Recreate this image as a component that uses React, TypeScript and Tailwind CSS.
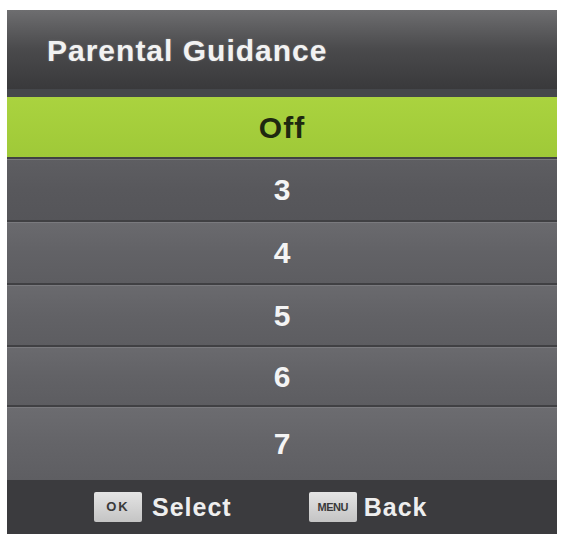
const rows = [
  { label: "3", h: "h-[63px]", bg: "from-[#5e5e62] via-[#58585c] to-[#555559]" },
  { label: "4", h: "h-[63px]", bg: "from-[#6a6a6e] via-[#626266] to-[#5d5d61]" },
  { label: "5", h: "h-[62px]", bg: "from-[#6a6a6e] via-[#626266] to-[#5d5d61]" },
  { label: "6", h: "h-[60px]", bg: "from-[#6a6a6e] via-[#626266] to-[#5d5d61]" },
  { label: "7", h: "h-[75px]", bg: "from-[#6c6c70] via-[#646468] to-[#5e5e62]" },
];

function Key({ text, wide }: { text: string; wide?: boolean }) {
  return (
    <span
      className={`flex h-[30px] w-[48px] items-center justify-center rounded-[2px] bg-gradient-to-b from-[#e4e4e4] to-[#c4c4c4] font-bold text-[#3a3a3a] ${
        wide ? "text-[11px] tracking-[-0.5px]" : "text-[13px] tracking-[2px]"
      }`}
    >
      {text}
    </span>
  );
}

export default function App() {
  return (
    <div className="h-[534px] w-[562px] overflow-hidden bg-white pt-[10px] pl-[7px] pr-[5px] font-['Liberation_Sans',Arial,sans-serif]">
      <div className="flex flex-col">
        {/* title bar */}
        <div className="flex h-[87px] flex-col bg-gradient-to-b from-[#6e6e70] via-[#4a4a4c] via-45% to-[#363638]">
          <div className="flex flex-1 items-center pl-[40px] pt-[2px]">
            <h1 className="text-[30px] font-bold tracking-[1px] text-[#f2f2f2] [text-shadow:0_0_2px_rgba(255,255,255,0.3)]">
              Parental Guidance
            </h1>
          </div>
          <div className="h-[8px] bg-[#45474b]" />
        </div>

        {/* selected */}
        <div className="flex h-[60px] items-center justify-center bg-gradient-to-b from-[#aad33f] to-[#9fc938]">
          <span className="text-[30px] font-bold tracking-[1px] text-[#1e2810]">Off</span>
        </div>

        {rows.map((r) => (
          <div
            key={r.label}
            className={`flex ${r.h} items-center justify-center border-t-2 border-t-[#404043] bg-gradient-to-b ${r.bg} shadow-[inset_0_1px_0_#7a7a7e]`}
          >
            <span className="text-[30px] font-bold text-[#f4f4f4]">{r.label}</span>
          </div>
        ))}

        {/* footer */}
        <div className="flex h-[60px] items-start gap-[10px] bg-[#3b3b3e] pl-[87px] pt-[12px]">
          <Key text="OK" />
          <span className="text-[25px] font-bold leading-[30px] tracking-[1px] text-[#eeeeee]">Select</span>
          <span className="ml-[67px]">
            <Key text="MENU" wide />
          </span>
          <span className="-ml-[3px] text-[25px] font-bold leading-[30px] tracking-[1px] text-[#eeeeee]">Back</span>
        </div>
      </div>
    </div>
  );
}
